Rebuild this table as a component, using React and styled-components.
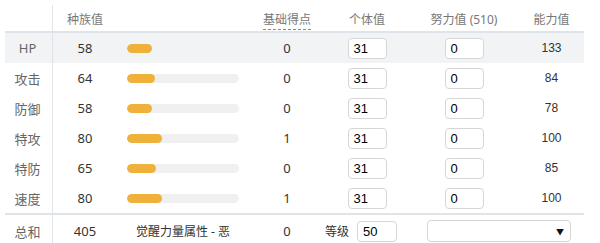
import styled, { createGlobalStyle } from 'styled-components';

const GlobalStyle = createGlobalStyle`
  body {
    margin: 0;
    background: #fff;
    font-family: "Noto Sans", "Noto Sans CJK SC", sans-serif;
  }
`
const Table = styled.div`
  width: 579px;
  padding: 5px 0 0 5px;
`
const COLS = '48px 64px 132px 76px 84px 110px 65px';

const Row = styled.div`
  display: grid;
  grid-template-columns: ${COLS};
  height: ${p => p.$height || 30}px;
  align-items: center;
  background: ${p => (p.$shaded ? '#f2f3f5' : 'transparent')};
  border-bottom: ${p => (p.$line ? '2px solid #dfe3ea' : 'none')};
  border-top: ${p => (p.$top ? '2px solid #dfe3ea' : 'none')};
`
const Label = styled.div`
  align-self: stretch;
  display: flex;
  align-items: center;
  justify-content: center;
  padding-right: 2px;
  border-right: 1px solid #dfe3ea;
  color: #666;
  font-size: 13px;
`
const HeadCell = styled.div`
  text-align: center;
  color: #777;
  font-size: 12px;
  padding-top: 2px;
`
const Dashed = styled.span`
  border-bottom: 1px dashed #888;
  padding-bottom: 1px;
`
const Cell = styled.div`
  text-align: center;
  color: #333;
  font-size: ${p => p.$size || 13}px;
`
const Stat = styled.div`
  text-align: center;
  color: #333;
  font-family: "Liberation Sans", Arial, sans-serif;
  font-size: 12px;
`
const Track = styled.div`
  margin-left: 10px;
  width: 112px;
  height: 9px;
  border-radius: 5px;
  background: ${p => (p.$hidden ? 'transparent' : '#f0f0f0')};
  overflow: hidden;
`
const Fill = styled.div`
  height: 100%;
  border-radius: 5px;
  background: #efb13a;
`
const Input = styled.div`
  box-sizing: border-box;
  width: ${p => p.$w || 39}px;
  height: 21px;
  margin: 0 auto;
  padding: 0 5px;
  display: flex;
  align-items: center;
  border: 1px solid #d6d6d6;
  border-radius: 4px;
  background: #fff;
  color: #000;
  font-family: "Liberation Sans", Arial, sans-serif;
  font-size: 13px;
`
const LevelBox = styled.div`
  display: flex;
  align-items: center;
  justify-content: flex-end;
  gap: 4px;
  padding-right: 8px;
  color: #333;
  font-size: 12px;
`
const Select = styled.div`
  box-sizing: border-box;
  width: 144px;
  height: 22px;
  margin-left: 18px;
  padding-right: 6px;
  display: flex;
  align-items: center;
  justify-content: flex-end;
  border: 1px solid #d6d6d6;
  border-radius: 4px;
  background: #fff;
  grid-column: span 2;
  font-size: 8px;
  color: #111;
`

const stats = [
  { name: 'HP', base: 58, pt: 0, total: 133 },
  { name: '攻击', base: 64, pt: 0, total: 84 },
  { name: '防御', base: 58, pt: 0, total: 78 },
  { name: '特攻', base: 80, pt: 1, total: 100 },
  { name: '特防', base: 65, pt: 0, total: 85 },
  { name: '速度', base: 80, pt: 1, total: 100 },
]

function App() {
  return (
    <Table>
      <GlobalStyle />
      <Row $height={26} $line>
        <Label />
        <HeadCell>种族值</HeadCell>
        <HeadCell />
        <HeadCell><Dashed>基础得点</Dashed></HeadCell>
        <HeadCell>个体值</HeadCell>
        <HeadCell>努力值 (510)</HeadCell>
        <HeadCell>能力值</HeadCell>
      </Row>
      {stats.map((s, i) => (
        <Row key={s.name} $shaded={i === 0}>
          <Label>{s.name}</Label>
          <Cell>{s.base}</Cell>
          <Track $hidden={i === 0}>
            <Fill style={{ width: `${(s.base / 255) * 112}px` }} />
          </Track>
          <Cell>{s.pt}</Cell>
          <Input>31</Input>
          <Input>0</Input>
          <Stat>{s.total}</Stat>
        </Row>
      ))}
      <Row $height={32} $top>
        <Label>总和</Label>
        <Cell>405</Cell>
        <Cell $size={12}>觉醒力量属性 - 恶</Cell>
        <Cell>0</Cell>
        <LevelBox>等级<Input $w={40}>50</Input></LevelBox>
        <Select>▼</Select>
      </Row>
    </Table>
  );
}

export default App;
